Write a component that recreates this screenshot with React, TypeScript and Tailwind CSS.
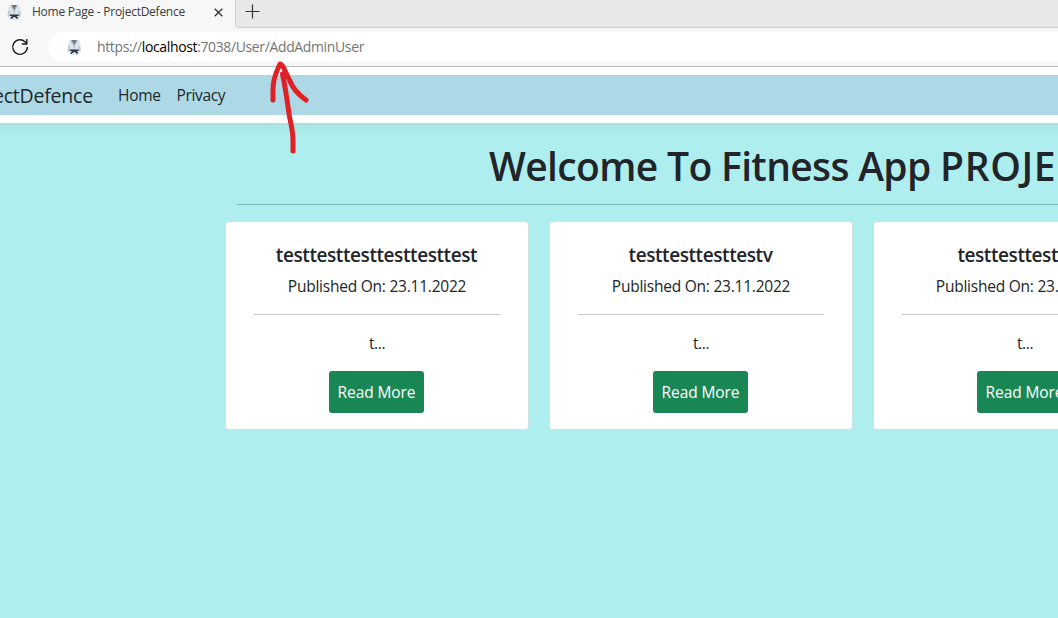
import React from "react";

const cards = [
  { title: "testtesttesttesttesttest", text: "t..." },
  { title: "testtesttesttestv", text: "t..." },
  { title: "testtesttesttest", text: "t..." },
];

function Kimono() {
  return (
    <svg width="16" height="18" viewBox="0 0 16 18" className="shrink-0">
      <path d="M4.5 2 2.4 3.5 1.6 13.2l2.4.6-.2 3.2h9l-.2-3.2 2.2-.6-.8-9.7L11.8 2Z" fill="#dce6ee" />
      <path d="M2.1 8 1.6 13.2l2.4.6.3-5.8Zm10 0 .4 5.8 2.3-.6L14.4 8Z" fill="#bccbd8" />
      <path d="M5.5 2 8.2 6.8 10.8 2Z" fill="#6b7279" />
      <path d="M4.9 2 8.2 8l3.2-6M8.2 7.500v3" fill="none" stroke="#a3adb6" strokeWidth="1" />
      <path d="M4 11.400h8.600v1.700H10.300l2 1.600-1 1.300L8.300 13.700l-3 2.300-1-1.300 2-1.600H4Z" fill="#2b3138" />
    </svg>
  );
}

function Browser() {
  return (
    <header className="h-[67px] w-full border-b border-[#bdb9bb] bg-[#f7f7f7]">
      <div className="flex h-7">
        <div className="flex w-[235px] shrink-0 items-center pb-1 pl-1.5">
          <Kimono />
          <span className="ml-[10px] w-[153px] shrink-0 whitespace-nowrap text-[12px] tracking-[-0.25px] text-[#3b3b3b]">Home Page - ProjectDefence</span>
          <svg width="9" height="9" viewBox="0 0 9 9" className="ml-[29px] mt-px">
            <path d="m.7.7 7.6 7.6m0-7.6L.7 8.3" stroke="#333" strokeWidth="1.3" />
          </svg>
        </div>
        <div className="flex-1 rounded-bl-[4px] border-b border-l border-[#cfcfcf] bg-[#e8e8e8] pl-[9px] pt-[4px]">
          <svg width="15" height="15" viewBox="0 0 15 15">
            <path d="M7.5.5v14M.5 7.5h14" stroke="#333" strokeWidth="1.2" />
          </svg>
        </div>
      </div>
      <div className="flex pt-1">
        <svg width="18" height="18" viewBox="0 0 18 18" className="ml-[11px] mt-[6px] shrink-0">
          <path d="M16.3 9A7.3 7.3 0 1 1 14.2 3.900L15.8 5.600" fill="none" stroke="#1c1c1c" strokeWidth="1.4" />
          <path d="M15.8 1v5h-5" fill="none" stroke="#1c1c1c" strokeWidth="1.4" />
        </svg>
        <div className="ml-[19px] flex h-[30px] flex-1 items-center rounded-l-full bg-white pl-[18px]">
          <Kimono />
          <span className="mb-px ml-[15px] whitespace-nowrap text-[14px] tracking-[-0.37px] text-[#757575]">
            https://<span className="text-black">localhost</span>:7038/User/AddAdminUser
          </span>
        </div>
      </div>
    </header>
  );
}

function Navbar() {
  return (
    <div className="h-14 bg-white py-2">
      <nav className="flex h-10 items-center bg-[#add8e6] pt-0.5 text-[#20282c]">
        <span className="flex w-[93px] justify-end whitespace-nowrap text-[19.5px] tracking-[-0.2px]">ProjectDefence</span>
        <span className="ml-[25px] w-[58.5px] text-[15.5px] tracking-[-0.3px]">Home</span>
        <span className="text-[15.5px] tracking-[-0.35px]">Privacy</span>
      </nav>
    </div>
  );
}

export default function App() {
  return (
    <div className="relative h-[618px] w-[1058px] overflow-hidden bg-[#afeeee] font-['Open_Sans','Noto_Sans',sans-serif] text-[#212529]">
      <Browser />
      <Navbar />
      <main className="h-[495px] bg-linear-to-b from-[#a6e4e2] to-[#afeeee] to-[14px]">
        <div className="ml-[237px] h-[82px] border-b border-[#84b9ba] pl-[252px] pt-[19px]">
          <h1 className="whitespace-nowrap text-[39px] font-semibold leading-[48px] tracking-[-0.65px]">
            Welcome To Fitness App <span className="tracking-[0.6px]">PROJECT</span>
          </h1>
        </div>
        <div className="ml-[225px] mt-4 flex gap-[20px]">
          {cards.map((c) => (
            <article key={c.title} className="flex h-[209px] w-[304px] shrink-0 flex-col items-center rounded border border-[#cfe3e3] bg-white pt-[21px]">
              <h5 className="pr-px text-[19px] font-semibold leading-6 tracking-[-0.42px]">{c.title}</h5>
              <p className="mt-[7px] text-[15.5px] leading-6 tracking-[-0.23px]">Published On: 23.11.2022</p>
              <hr className="mt-4 w-[246px] border-[#c5c7c8]" />
              <p className="mt-4 text-[15.5px] leading-6 tracking-[-0.4px]">{c.text}</p>
              <button className="mr-px mt-4 h-[42px] w-[95px] shrink-0 whitespace-nowrap rounded-[3px] bg-[#198754] pt-0.5 text-[15.5px] tracking-[-0.1px] text-white">Read More</button>
            </article>
          ))}
        </div>
      </main>
      <svg className="pointer-events-none absolute left-[265px] top-[55px]" width="50" height="105" viewBox="265 55 50 105">
        <path
          d="M273 100v-11c0-9 2-15 7-25 3 0 6 10 10 17 3 8 9 14 16 19M282.5 74c2 9 4 22 6 36 1 11 4.500 17 4.500 31v10"
          fill="none"
          stroke="#df2024"
          strokeWidth="5"
          strokeLinecap="round"
          strokeLinejoin="round"
        />
      </svg>
    </div>
  );
}
